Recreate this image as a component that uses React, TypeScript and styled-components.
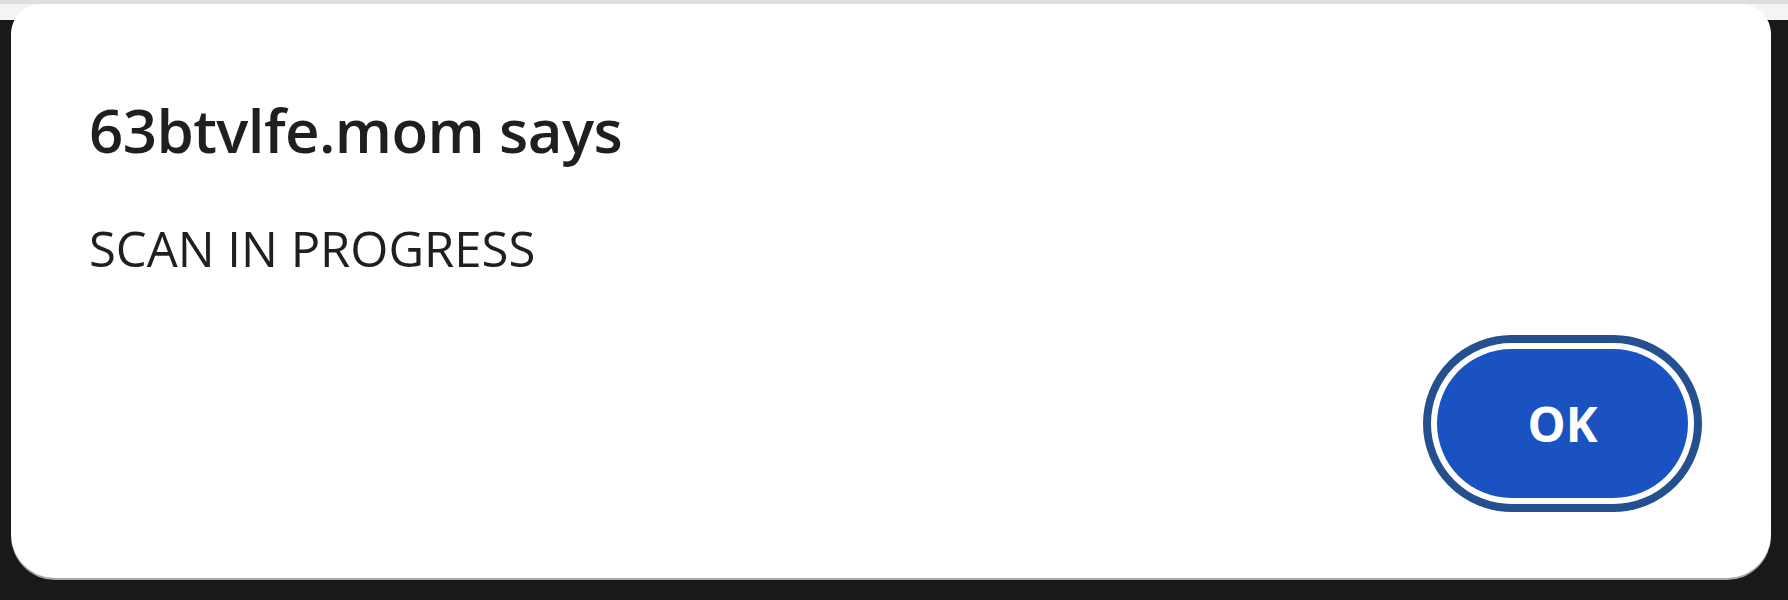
import React from 'react';
import styled, { createGlobalStyle } from 'styled-components';

const GlobalStyle = createGlobalStyle`
  html, body {
    margin: 0;
    padding: 0;
    background: #17191b;
  }
  * {
    box-sizing: border-box;
  }
`;

const Backdrop = styled.div`
  width: 1788px;
  height: 600px;
  display: flex;
  padding: 4px 17px 22px 11px;
  background: linear-gradient(
    to bottom,
    #dedede 0,
    #dedede 4px,
    #f4f4f4 4px,
    #f4f4f4 20px,
    #17191b 20px
  );
`;

const Dialog = styled.div`
  flex: 1;
  display: flex;
  flex-direction: column;
  padding: 90px 84px 81px 78px;
  background: #ffffff;
  border-radius: 30px 30px 44px 44px;
  box-shadow: 0 2px 0 #a8a8a8;
  font-family: 'Open Sans', 'Noto Sans', sans-serif;
  color: #1f1f1f;
`;

const Title = styled.h1`
  margin: 0;
  font-size: 60px;
  line-height: 72px;
  font-weight: 600;
  letter-spacing: -0.6px;
`;

const Message = styled.p`
  margin: 52px 0 0;
  font-size: 49px;
  line-height: 60px;
  font-weight: 400;
`;

const Actions = styled.div`
  margin-top: auto;
  display: flex;
  justify-content: flex-end;
`;

const OkButton = styled.button`
  width: 251px;
  height: 149px;
  margin: 0 -1px -1px 0;
  border: none;
  border-radius: 75px;
  background: #1a52c2;
  color: #ffffff;
  font-family: 'Open Sans', 'Noto Sans', sans-serif;
  font-size: 48px;
  font-weight: 700;
  outline: 8px solid #24508f;
  outline-offset: 6px;
  cursor: pointer;
`;

const App = () => {
  return (
    <>
      <GlobalStyle />
      <Backdrop>
        <Dialog>
          <Title>63btvlfe.mom says</Title>
          <Message>SCAN IN PROGRESS</Message>
          <Actions>
            <OkButton type="button">OK</OkButton>
          </Actions>
        </Dialog>
      </Backdrop>
    </>
  );
};

export default App;
